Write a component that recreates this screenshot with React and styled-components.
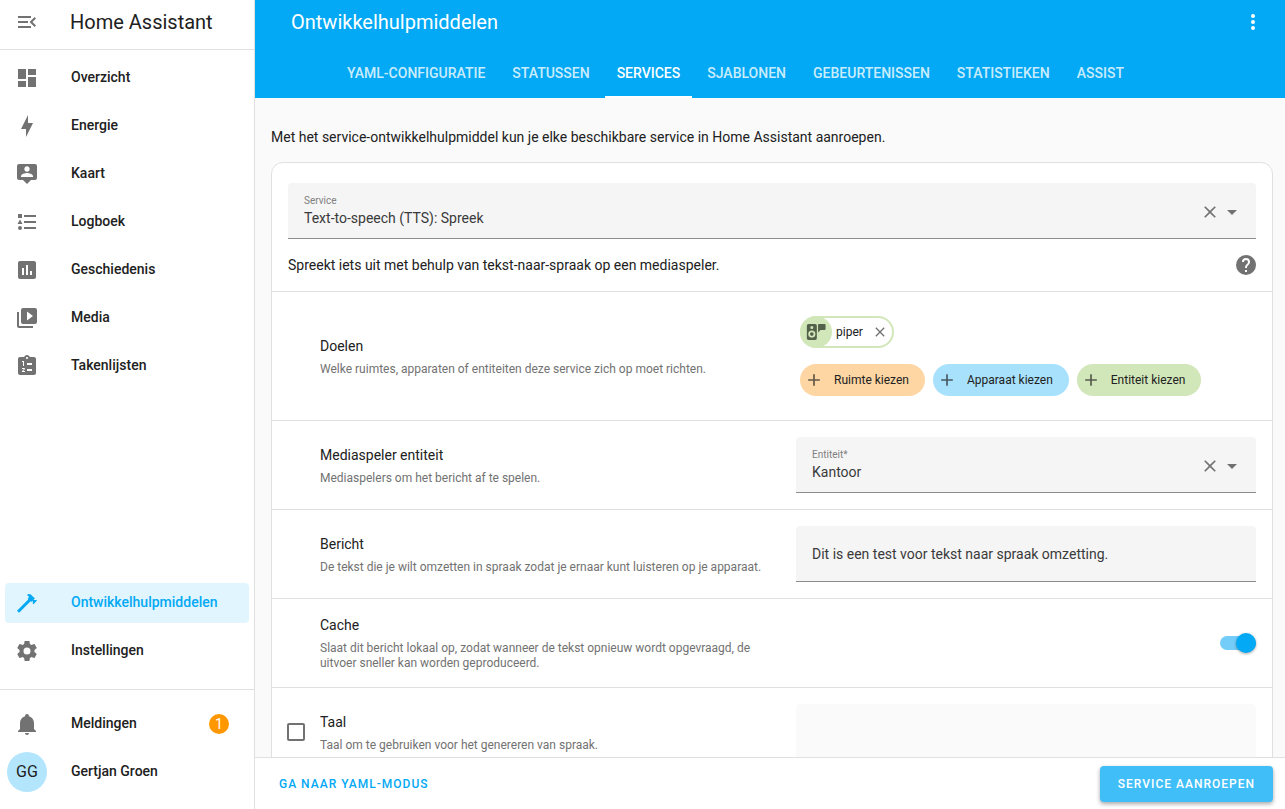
import React, {useState} from 'react';
import styled, {createGlobalStyle, css} from 'styled-components';

const Colors = {
   primary: '#03a9f4',
   text: '#212121',
   secondary: '#727272',
   divider: '#e0e0e0',
   background: '#fafafa',
   field: '#f5f5f5',
   orange: '#ff9800',
};

const GlobalStyle = createGlobalStyle`
   *, *::before, *::after {
      box-sizing: border-box;
   }
   body {
      margin: 0;
      background-color: ${Colors.background};
      color: ${Colors.text};
      font-family: Roboto, sans-serif;
      font-size: 14px;
      line-height: 20px;
   }
   button, input, select {
      font: inherit;
      letter-spacing: inherit;
      color: inherit;
      margin: 0;
   }
`;

const ICONS = {
   menu: 'M21,15.61L19.59,17L14.58,12L19.59,7L21,8.39L17.44,12L21,15.61M3,6H16V8H3V6M3,13V11H13V13H3M3,18V16H16V18H3Z',
   dashboard: 'M13,3V9H21V3M13,21H21V11H13M3,21H11V15H3M3,13H11V3H3V13Z',
   energy: 'M11 15H6L13 1V9H18L11 23V15Z',
   map: 'M20,2H4A2,2 0 0,0 2,4V16A2,2 0 0,0 4,18H8L12,22L16,18H20A2,2 0 0,0 22,16V4A2,2 0 0,0 20,2M12,4.3C13.5,4.3 14.7,5.5 14.7,7C14.7,8.5 13.5,9.7 12,9.7C10.5,9.7 9.3,8.5 9.3,7C9.3,5.5 10.5,4.3 12,4.3M18,15H6V14.1C6,12.1 10,11 12,11C14,11 18,12.1 18,14.1V15Z',
   logbook: 'M5,9.5L7.5,14H2.5L5,9.5M3,4H7V8H3V4M5,20A2,2 0 0,0 7,18A2,2 0 0,0 5,16A2,2 0 0,0 3,18A2,2 0 0,0 5,20M9,5V7H21V5H9M9,19H21V17H9V19M9,13H21V11H9V13Z',
   history: 'M9 17H7V10H9V17M13 17H11V7H13V17M17 17H15V13H17V17M19 3H5C3.9 3 3 3.9 3 5V19C3 20.1 3.9 21 5 21H19C20.1 21 21 20.1 21 19V5C21 3.9 20.1 3 19 3Z',
   media: 'M4,6H2V20A2,2 0 0,0 4,22H18V20H4V6M20,2H8A2,2 0 0,0 6,4V16A2,2 0 0,0 8,18H20A2,2 0 0,0 22,16V4A2,2 0 0,0 20,2M12,14.5V5.5L18,10L12,14.5Z',
   todo: 'M19 3H14.82C14.4 1.84 13.3 1 12 1S9.6 1.84 9.18 3H5C3.9 3 3 3.9 3 5V19C3 20.1 3.9 21 5 21H19C20.1 21 21 20.1 21 19V5C21 3.9 20.1 3 19 3M12 3C12.55 3 13 3.45 13 4S12.55 5 12 5 11 4.55 11 4 11.45 3 12 3M7 7H9V12H8V8H7V7M10 17V18H7V17.08L9 15H7V14H9.25C9.66 14 10 14.34 10 14.75C10 14.95 9.92 15.14 9.79 15.27L8.12 17H10M12 9H17V11H12V9M12 15H17V17H12V15Z',
   tools: 'M2,19.63L13.43,8.2L12.72,7.5L14.14,6.07L12,3.89C13.2,2.7 15.09,2.7 16.27,3.89L19.87,7.5L18.45,8.91H21.29L22,9.62L18.45,13.21L17.74,12.5V9.62L16.27,11.04L15.56,10.33L4.13,21.76L2,19.63Z',
   settings: 'M12,15.5A3.5,3.5 0 0,1 8.5,12A3.5,3.5 0 0,1 12,8.5A3.5,3.5 0 0,1 15.5,12A3.5,3.5 0 0,1 12,15.5M19.43,12.97C19.47,12.65 19.5,12.33 19.5,12C19.5,11.67 19.47,11.34 19.43,11L21.54,9.37C21.73,9.22 21.78,8.95 21.66,8.73L19.66,5.27C19.54,5.05 19.27,4.96 19.05,5.05L16.56,6.05C16.04,5.66 15.5,5.32 14.87,5.07L14.5,2.42C14.46,2.18 14.25,2 14,2H10C9.75,2 9.54,2.18 9.5,2.42L9.13,5.07C8.5,5.32 7.96,5.66 7.44,6.05L4.95,5.05C4.73,4.96 4.46,5.05 4.34,5.27L2.34,8.73C2.21,8.95 2.27,9.22 2.46,9.37L4.57,11C4.53,11.34 4.5,11.67 4.5,12C4.5,12.33 4.53,12.65 4.57,12.97L2.46,14.63C2.27,14.78 2.21,15.05 2.34,15.27L4.34,18.73C4.46,18.95 4.73,19.03 4.95,18.95L7.44,17.94C7.96,18.34 8.5,18.68 9.13,18.93L9.5,21.58C9.54,21.82 9.75,22 10,22H14C14.25,22 14.46,21.82 14.5,21.58L14.87,18.93C15.5,18.67 16.04,18.34 16.56,17.94L19.05,18.95C19.27,19.03 19.54,18.95 19.66,18.73L21.66,15.27C21.78,15.05 21.73,14.78 21.54,14.63L19.43,12.97Z',
   bell: 'M21,19V20H3V19L5,17V11C5,7.9 7.03,5.17 10,4.29C10,4.19 10,4.1 10,4A2,2 0 0,1 12,2A2,2 0 0,1 14,4C14,4.1 14,4.19 14,4.29C16.97,5.17 19,7.9 19,11V17L21,19M14,21A2,2 0 0,1 12,23A2,2 0 0,1 10,21',
   dots: 'M12,16A2,2 0 0,1 14,18A2,2 0 0,1 12,20A2,2 0 0,1 10,18A2,2 0 0,1 12,16M12,10A2,2 0 0,1 14,12A2,2 0 0,1 12,14A2,2 0 0,1 10,12A2,2 0 0,1 12,10M12,4A2,2 0 0,1 14,6A2,2 0 0,1 12,8A2,2 0 0,1 10,6A2,2 0 0,1 12,4Z',
   close: 'M19,6.41L17.59,5L12,10.59L6.41,5L5,6.41L10.59,12L5,17.59L6.41,19L12,13.41L17.59,19L19,17.59L13.41,12L19,6.41Z',
   caret: 'M7,10L12,15L17,10H7Z',
   help: 'M15.07,11.25L14.17,12.17C13.45,12.89 13,13.5 13,15H11V14.5C11,13.39 11.45,12.39 12.17,11.67L13.41,10.41C13.78,10.05 14,9.55 14,9C14,7.89 13.1,7 12,7A2,2 0 0,0 10,9H8A4,4 0 0,1 12,5A4,4 0 0,1 16,9C16,9.88 15.64,10.67 15.07,11.25M13,19H11V17H13M12,2A10,10 0 0,0 2,12A10,10 0 0,0 12,22A10,10 0 0,0 22,12C22,6.47 17.5,2 12,2Z',
   plus: 'M19,13H13V19H11V13H5V11H11V5H13V11H19V13Z',
   speaker: 'M3 2.5H11A2 2 0 0 1 13 4.5V19.5A2 2 0 0 1 11 21.5H3A2 2 0 0 1 1 19.5V4.5A2 2 0 0 1 3 2.5M7 4.8A1.8 1.8 0 1 0 7 8.4A1.8 1.8 0 1 0 7 4.8M7 10.2A4.3 4.3 0 1 0 7 18.8A4.3 4.3 0 1 0 7 10.2M7 12.3A2.2 2.2 0 1 1 7 16.7A2.2 2.2 0 1 1 7 12.3M15.5 2.5H22.5A1 1 0 0 1 23.5 3.5V8.5A1 1 0 0 1 22.5 9.5H17.5L14.5 12.5V3.5A1 1 0 0 1 15.5 2.5Z',
};

const Svg = styled.svg`
   display: block;
   flex: none;
   fill: currentColor;
   fill-rule: evenodd;
`;

function Icon({name, size = 24}) {
   return <Svg width={size} height={size} viewBox="0 0 24 24" aria-hidden="true"><path d={ICONS[name]}/></Svg>;
}

const Page = styled.div`
   display: flex;
   height: 100vh;
   overflow: hidden;
`;

/* sidebar */

const Sidebar = styled.aside`
   display: flex;
   flex-direction: column;
   flex: none;
   width: 255px;
   background-color: white;
   border-right: 1px solid ${Colors.divider};
`;

const SidebarHeader = styled.div`
   display: flex;
   align-items: center;
   gap: 31px;
   padding: 0 15px 6px;
   height: 50px;
   border-bottom: 1px solid ${Colors.divider};
   font-size: 20px;
`;

const IconButton = styled.button`
   display: flex;
   flex: none;
   padding: 0;
   border: none;
   background: none;
   color: ${props => props.$color || Colors.secondary};
   cursor: pointer;
`;

const Nav = styled.nav`
   display: flex;
   flex-direction: column;
   gap: 8px;
   padding: 8px 5px;
`;

const MainNav = styled(Nav)`
   flex: 1;
`;

const FooterNav = styled(Nav)`
   margin-top: 10px;
   padding: 14px 5px 17px;
   border-top: 1px solid ${Colors.divider};
`;

const Spacer = styled.div`
   flex: 1;
`;

const NavItem = styled.a`
   display: flex;
   align-items: center;
   gap: 32px;
   height: 40px;
   padding: 0 20px 0 10px;
   border-radius: 4px;
   color: ${Colors.secondary};
   font-weight: 500;
   text-decoration: none;
   ${props => props.$active && css`
      background-color: #e1f5fe;
      color: ${Colors.primary};
   `}
`;

const NavText = styled.span`
   flex: 1;
   padding-bottom: 2px;
   color: ${props => props.$active ? Colors.primary : Colors.text};
`;

const Badge = styled.span`
   width: 20px;
   border-radius: 50%;
   background-color: ${Colors.orange};
   color: white;
   font-weight: 400;
   text-align: center;
`;

const UserItem = styled(NavItem)`
   gap: 24px;
   padding-left: 2px;
`;

const Avatar = styled.span`
   width: 40px;
   border-radius: 50%;
   background-color: #b3e5fc;
   color: ${Colors.text};
   font-size: 16px;
   font-weight: 400;
   line-height: 40px;
   text-align: center;
`;

/* top bar */

const Main = styled.main`
   display: flex;
   flex-direction: column;
   flex: 1;
   min-width: 0;
`;

const Header = styled.header`
   flex: none;
   background-color: ${Colors.primary};
   color: white;
`;

const Toolbar = styled.div`
   display: flex;
   align-items: center;
   justify-content: space-between;
   height: 44px;
   padding: 0 20px 0 36px;
`;

const Title = styled.h1`
   margin: 0;
   font-size: 20px;
   font-weight: 400;
`;

const Tabs = styled.nav`
   display: flex;
   gap: 3px;
   padding: 6px 80px 0;
`;

const Tab = styled.a`
   height: 48px;
   padding: 0 12px;
   border-bottom: 2px solid ${props => props.$active ? 'white' : 'transparent'};
   color: ${props => props.$active ? 'white' : 'rgba(255, 255, 255, 0.8)'};
   font-weight: 500;
   line-height: 46px;
   text-decoration: none;
   text-transform: uppercase;
`;

/* content */

const Content = styled.div`
   flex: 1;
   min-height: 0;
   padding: 29px 12px 0 16px;
   overflow: hidden;
`;

const Intro = styled.p`
   margin: 0 0 15px;
`;

const Card = styled.section`
   background-color: white;
   border: 1px solid ${Colors.divider};
   border-radius: 12px;
`;

const CardTop = styled.div`
   padding: 20px 16px 16px;
`;

const Field = styled.div`
   display: flex;
   align-items: center;
   height: 56px;
   padding: 0 12px 0 16px;
   border-bottom: 1px solid #8c8c8c;
   border-radius: 4px 4px 0 0;
   background-color: ${Colors.field};
   color: ${Colors.secondary};
   ${props => props.$disabled && css`
      border-bottom-color: ${Colors.divider};
      background-color: ${Colors.background};
   `}
`;

const FieldBody = styled.div`
   display: flex;
   flex-direction: column;
   flex: 1;
`;

const FieldLabel = styled.label`
   color: #808080;
   font-size: 10px;
   line-height: 14px;
`;

const FieldActions = styled.div`
   display: flex;
   align-items: center;
   padding-top: 3px;
`;

const Select = styled.select`
   appearance: none;
   width: 100%;
   height: 20px;
   padding: 0;
   border: none;
   background: none;
   color: #3a3a3a;
`;

const TextInput = styled.input`
   flex: 1;
   min-width: 0;
   padding: 0;
   border: none;
   outline: none;
   background: none;
   color: #3a3a3a;
`;

const Description = styled.div`
   display: flex;
   align-items: center;
   justify-content: space-between;
   height: 36px;
   margin-right: -2px;
   padding-top: 15px;
`;

const Row = styled.div`
   display: grid;
   grid-template-columns: 16px 1fr 460px;
   align-items: center;
   gap: 16px;
   min-height: 89px;
   padding: 16px;
   border-top: 1px solid ${Colors.divider};
`;

const RowText = styled.div`
   grid-column: 2;
`;

const RowTitle = styled.label`
   display: block;
`;

const RowHint = styled.p`
   margin: 6px 0 0;
   color: ${Colors.secondary};
   font-size: 12px;
   line-height: 15px;
`;

const Checkbox = styled.input`
   appearance: none;
   width: 18px;
   height: 18px;
   margin: 0 -1px;
   border: 2px solid ${Colors.secondary};
   border-radius: 2px;
`;

const Switch = styled.input`
   appearance: none;
   display: flex;
   align-items: center;
   justify-self: end;
   justify-content: flex-end;
   width: 36px;
   height: 14px;
   border-radius: 7px;
   background-color: #74cdf9;
   cursor: pointer;

   &::before {
      content: '';
      width: 20px;
      height: 20px;
      border-radius: 50%;
      background-color: ${Colors.primary};
      box-shadow: 0 1px 3px rgba(0, 0, 0, 0.35);
   }

   &:not(:checked) {
      justify-content: flex-start;
      background-color: #bdbdbd;
   }

   &:not(:checked)::before {
      background-color: white;
   }
`;

const Targets = styled.div`
   display: flex;
   flex-direction: column;
   align-items: flex-start;
   gap: 16px;
   padding: 8px 4px;
`;

const ChipRow = styled.div`
   display: flex;
   gap: 8px;
   font-size: 12px;
`;

const EntityChip = styled.div`
   display: flex;
   align-items: center;
   height: 32px;
   padding-right: 6px;
   border-radius: 16px;
   box-shadow: inset 0 0 0 2px #d2e7b9;
`;

const ChipIcon = styled.span`
   display: flex;
   align-items: center;
   justify-content: center;
   width: 32px;
   height: 32px;
   margin-right: 4px;
   border-radius: 50%;
   background-color: #d2e7b9;
   color: #54614a;
`;

const ChipClose = styled(IconButton)`
   margin-left: 9px;
`;

const AddChip = styled.button`
   display: flex;
   align-items: center;
   gap: 10px;
   height: 32px;
   padding: 0 16px 0 4px;
   border: none;
   border-radius: 16px;
   background-color: ${props => props.$color};
   cursor: pointer;

   svg {
      opacity: 0.7;
   }
`;

/* bottom bar */

const ActionBar = styled.footer`
   display: flex;
   align-items: center;
   justify-content: space-between;
   flex: none;
   height: 52px;
   padding: 0 12px 0 16px;
   border-top: 1px solid ${Colors.divider};
   background-color: white;
`;

const TextButton = styled.button`
   height: 36px;
   padding: 0 8px;
   border: none;
   border-radius: 4px;
   background: none;
   color: ${Colors.primary};
   font-size: 12px;
   font-weight: 500;
   letter-spacing: 1px;
   text-transform: uppercase;
   cursor: pointer;
`;

const RaisedButton = styled(TextButton)`
   padding: 0 18px;
   background-color: #40bef8;
   box-shadow: 0 2px 4px rgba(0, 0, 0, 0.35);
   color: white;
`;

const NAV_ITEMS = [
   ['dashboard', 'Overzicht'],
   ['energy', 'Energie'],
   ['map', 'Kaart'],
   ['logbook', 'Logboek'],
   ['history', 'Geschiedenis'],
   ['media', 'Media'],
   ['todo', 'Takenlijsten'],
];

const TABS = ['YAML-configuratie', 'Statussen', 'Services', 'Sjablonen', 'Gebeurtenissen', 'Statistieken', 'Assist'];

function NavLink({icon, label, active, badge}) {
   return (
      <NavItem href="#" $active={active}>
         <Icon name={icon}/>
         <NavText $active={active}>{label}</NavText>
         {badge && <Badge>{badge}</Badge>}
      </NavItem>
   );
}

function SelectField({id, label, value}) {
   return (
      <Field>
         <FieldBody>
            <FieldLabel htmlFor={id}>{label}</FieldLabel>
            <Select id={id} defaultValue={value}>
               <option>{value}</option>
            </Select>
         </FieldBody>
         <FieldActions>
            <IconButton aria-label="Wissen"><Icon name="close" size={20}/></IconButton>
            <Icon name="caret"/>
         </FieldActions>
      </Field>
   );
}

function SettingRow({id, title, hint, check, children}) {
   return (
      <Row>
         {check}
         <RowText>
            <RowTitle as={id ? 'label' : 'div'} htmlFor={id}>{title}</RowTitle>
            <RowHint>{hint}</RowHint>
         </RowText>
         {children}
      </Row>
   );
}

export function App() {
   const [message, setMessage] = useState('Dit is een test voor tekst naar spraak omzetting.');
   const [cache, setCache] = useState(true);

   return (
      <Page>
         <GlobalStyle/>
         <Sidebar>
            <SidebarHeader>
               <IconButton aria-label="Menu"><Icon name="menu"/></IconButton>
               <span>Home Assistant</span>
            </SidebarHeader>
            <MainNav>
               {NAV_ITEMS.map(([icon, label]) => <NavLink key={label} icon={icon} label={label}/>)}
               <Spacer/>
               <NavLink icon="tools" label="Ontwikkelhulpmiddelen" active/>
               <NavLink icon="settings" label="Instellingen"/>
            </MainNav>
            <FooterNav>
               <NavLink icon="bell" label="Meldingen" badge="1"/>
               <UserItem href="#">
                  <Avatar>GG</Avatar>
                  <NavText>Gertjan Groen</NavText>
               </UserItem>
            </FooterNav>
         </Sidebar>

         <Main>
            <Header>
               <Toolbar>
                  <Title>Ontwikkelhulpmiddelen</Title>
                  <IconButton aria-label="Meer" $color="white"><Icon name="dots"/></IconButton>
               </Toolbar>
               <Tabs>
                  {TABS.map(tab => <Tab key={tab} href="#" $active={tab === 'Services'}>{tab}</Tab>)}
               </Tabs>
            </Header>

            <Content>
               <Intro>Met het service-ontwikkelhulpmiddel kun je elke beschikbare service in Home Assistant aanroepen.</Intro>
               <Card>
                  <CardTop>
                     <SelectField id="service" label="Service" value="Text-to-speech (TTS): Spreek"/>
                     <Description>
                        <span>Spreekt iets uit met behulp van tekst-naar-spraak op een mediaspeler.</span>
                        <IconButton aria-label="Help"><Icon name="help"/></IconButton>
                     </Description>
                  </CardTop>
                  <SettingRow title="Doelen" hint="Welke ruimtes, apparaten of entiteiten deze service zich op moet richten.">
                     <Targets>
                        <ChipRow>
                           <EntityChip>
                              <ChipIcon><Icon name="speaker" size={20}/></ChipIcon>
                              piper
                              <ChipClose aria-label="Verwijderen"><Icon name="close" size={16}/></ChipClose>
                           </EntityChip>
                        </ChipRow>
                        <ChipRow>
                           <AddChip $color="#fed6a4"><Icon name="plus" size={20}/>Ruimte kiezen</AddChip>
                           <AddChip $color="#a8e1fc"><Icon name="plus" size={20}/>Apparaat kiezen</AddChip>
                           <AddChip $color="#d2e7b9"><Icon name="plus" size={20}/>Entiteit kiezen</AddChip>
                        </ChipRow>
                     </Targets>
                  </SettingRow>
                  <SettingRow id="entity" title="Mediaspeler entiteit" hint="Mediaspelers om het bericht af te spelen.">
                     <SelectField id="entity" label="Entiteit*" value="Kantoor"/>
                  </SettingRow>
                  <SettingRow id="message" title="Bericht" hint="De tekst die je wilt omzetten in spraak zodat je ernaar kunt luisteren op je apparaat.">
                     <Field>
                        <TextInput id="message" value={message} onChange={e => setMessage(e.target.value)}/>
                     </Field>
                  </SettingRow>
                  <SettingRow id="cache" title="Cache" hint="Slaat dit bericht lokaal op, zodat wanneer de tekst opnieuw wordt opgevraagd, de uitvoer sneller kan worden geproduceerd.">
                     <Switch id="cache" type="checkbox" role="switch" checked={cache} onChange={e => setCache(e.target.checked)}/>
                  </SettingRow>
                  <SettingRow
                     id="use-language"
                     title="Taal"
                     hint="Taal om te gebruiken voor het genereren van spraak."
                     check={<Checkbox id="use-language" type="checkbox"/>}
                  >
                     <Field $disabled>
                        <TextInput aria-label="Taal" disabled/>
                     </Field>
                  </SettingRow>
               </Card>
            </Content>

            <ActionBar>
               <TextButton>Ga naar YAML-modus</TextButton>
               <RaisedButton>Service aanroepen</RaisedButton>
            </ActionBar>
         </Main>
      </Page>
   );
}

export default App;
